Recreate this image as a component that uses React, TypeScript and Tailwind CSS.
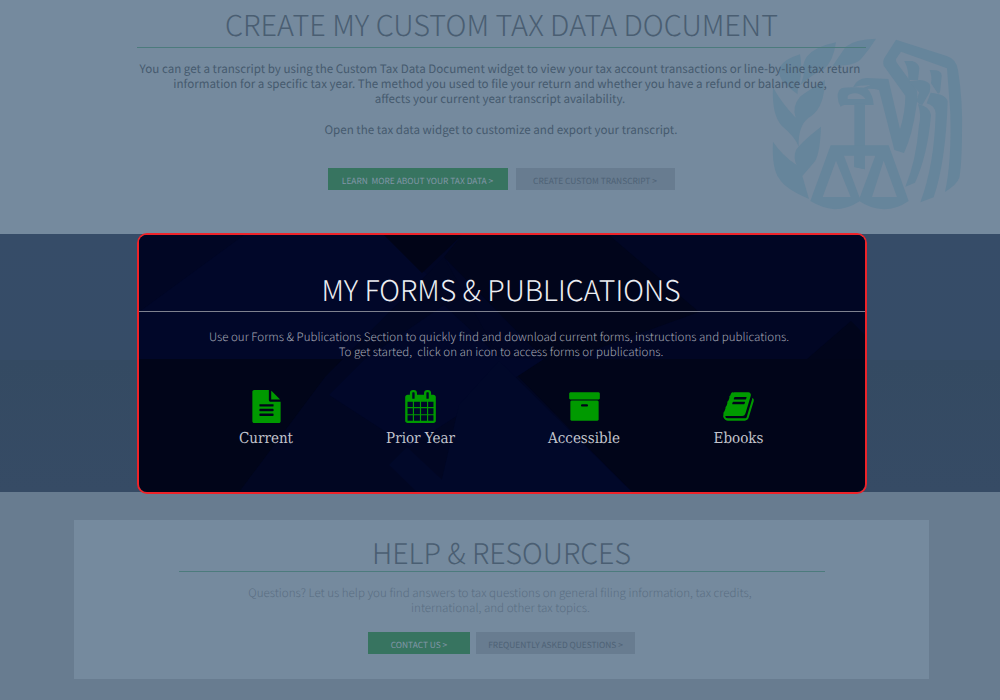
import type { ReactNode } from "react";

const SANS = "font-['Noto_Sans_CJK_SC','Noto_Sans',sans-serif] [text-rendering:geometricPrecision]";
const LIGHT = "font-['Noto_Sans_CJK_SC','Noto_Sans',sans-serif] font-light [text-rendering:geometricPrecision]";

function TaxEmblem() {
  return (
    <svg viewBox="0 0 660 570" className="absolute left-[760px] top-[30px] h-[190px] w-[220px]" fill="#66859b">
      <g transform="translate(15 15)">
        <path d="M105 58Q60 72 45 95Q38 112 50 135Q60 150 98 178Q96 165 104 145Q113 100 105 58Z" />
        <path d="M213 22Q150 35 125 65Q110 90 116 110Q118 122 106 150Q150 112 175 105Q205 80 213 22Z" />
        <path d="M333 11Q270 12 242 35Q225 60 203 92Q270 95 290 70Q315 40 333 11Z" />
        <path d="M24 157Q50 205 92 248Q80 215 105 185Q125 170 180 135Q178 215 140 242Q98 265 101 335Q90 305 50 272Q20 240 24 157Z" />
        <path d="M24 320Q50 360 95 390Q84 370 93 345Q110 320 168 275Q165 365 145 385L112 423L132 492Q60 462 42 430Q20 400 24 320Z" />
      </g>
      <g transform="translate(225 15)">
        <path d="M183 14L335 63Q364 72 369 105Q384 200 381 300Q380 390 373 428Q366 448 330 471Q350 380 346 235L336 100L198 50L183 72Q182 80 186 84L245 165Q250 180 244 215Q232 300 207 354L178 345L132 165Q110 158 80 163Q92 154 107 151Q75 150 54 157Q65 131 95 129L160 132L195 283Q211 230 211 182L146 92Q142 78 150 66Z" />
        <path d="M208 78L232 78Q252 85 253 100L249 135L220 135Q222 105 208 78Z" />
        <path d="M220 139L255 135Q285 138 286 155L284 172L262 210Q250 208 245 198L252 172Z" />
        <path d="M284 105L304 106Q320 110 320 122L316 165Q313 182 306 172L288 145Q292 125 284 105Z" />
        <path d="M249 207Q285 215 288 240Q278 360 240 443L211 455Q243 380 252 270Q260 240 249 207Z" />
        <path d="M287 173Q335 178 338 200Q332 380 296 487L256 502Q298 390 302 235Q300 212 275 205Z" />
        <path fillRule="evenodd" d="M8 185Q8 165 20 160Q40 155 95 158Q115 180 116 210H28Q20 212 17 215Q8 200 8 185ZM38 192V183Q45 175 60 175Q78 175 92 192Z" />
        <path d="M58 205H90V403L58 396Z" />
      </g>
      <path fillRule="evenodd" d="M212 346H386L446 513Q410 538 372 538Q330 536 299 514Q262 538 224 538Q186 534 151 513ZM228 392L188 501H272ZM371 392L336 501H411ZM252 377H283V411L315 418V377H346L299 503Z" />
    </svg>
  );
}

function BannerBackdrop() {
  return (
    <svg viewBox="0 0 726 257" className="absolute inset-0 h-full w-full" preserveAspectRatio="none">
      <rect width="726" height="257" fill="#010519" />
      <path d="M0 0H726V124H0Z" fill="#010624" />
      <path d="M0 77L105 0H245L300 50L226 124H0Z" fill="#010729" />
      <path d="M245 0L283 38L323 0Z" fill="#010417" />
      <path d="M305 22L323 0H470L560 77L430 124H405Z" fill="#01051b" />
      <path d="M305 22L186 142L100 257H493L360 122Z" fill="#010622" />
      <path d="M305 70L226 124L190 160L270 212L405 124L360 122Z" fill="#010729" />
      <path d="M360 126L320 170L300 257H493Z" fill="#010829" />
      <path d="M268 212L250 230L278 257H316Z" fill="#010829" />
      <path d="M712 86L668 124H726V100Z" fill="#01051b" />
    </svg>
  );
}

function FormLink({ label, path, className }: { label: string; path: string; className: string }) {
  return (
    <div className={`flex flex-col items-center ${className}`}>
      <svg viewBox="0 0 1792 1792" className="h-[33px] w-[33px]" fill="#009a00">
        <path d={path} />
      </svg>
      <div className="mt-[3px] whitespace-nowrap font-['DejaVu_Serif_Condensed','DejaVu_Serif',serif] text-[15px] leading-[24px] text-[#c4c6ce] [text-rendering:geometricPrecision]">{label}</div>
    </div>
  );
}

function Button({ children, className }: { children: ReactNode; className: string }) {
  return (
    <div className={`flex h-[22px] items-center justify-center whitespace-pre pt-[4px] text-[8.4px] ${SANS} ${className}`}>{children}</div>
  );
}

const FILE =
  "M1596 476q14 14 28 36h-472v-472q22 14 36 28zm-476 164h544v1056q0 40-28 68t-68 28h-1344q-40 0-68-28t-28-68v-1600q0-40 28-68t68-28h800v544q0 40 28 68t68 28zm160 736v-64q0-14-9-23t-23-9h-704q-14 0-23 9t-9 23v64q0 14 9 23t23 9h704q14 0 23-9t9-23zm0-256v-64q0-14-9-23t-23-9h-704q-14 0-23 9t-9 23v64q0 14 9 23t23 9h704q14 0 23-9t9-23zm0-256v-64q0-14-9-23t-23-9h-704q-14 0-23 9t-9 23v64q0 14 9 23t23 9h704q14 0 23-9t9-23z";
const CALENDAR =
  "M192 1664h288v-288h-288v288zm352 0h320v-288h-320v288zm-352-352h288v-320h-288v320zm352 0h320v-320h-320v320zm-352-384h288v-288h-288v288zm736 736h320v-288h-320v288zm-384-736h320v-288h-320v288zm768 736h288v-288h-288v288zm-384-352h320v-320h-320v320zm-352-864v-288q0-13-9.5-22.5t-22.5-9.5h-64q-13 0-22.5 9.5t-9.5 22.5v288q0 13 9.5 22.5t22.5 9.5h64q13 0 22.5-9.5t9.5-22.5zm736 864h288v-320h-288v320zm-384-384h320v-288h-320v288zm384 0h288v-288h-288v288zm32-480v-288q0-13-9.5-22.5t-22.5-9.5h-64q-13 0-22.5 9.5t-9.5 22.5v288q0 13 9.5 22.5t22.5 9.5h64q13 0 22.5-9.5t9.5-22.5zm384-64v1280q0 52-38 90t-90 38h-1408q-52 0-90-38t-38-90v-1280q0-52 38-90t90-38h128v-96q0-66 47-113t113-47h64q66 0 113 47t47 113v96h384v-96q0-66 47-113t113-47h64q66 0 113 47t47 113v96h128q52 0 90 38t38 90z";
const ARCHIVE =
  "M1088 832q0-26-19-45t-45-19h-256q-26 0-45 19t-19 45 19 45 45 19h256q26 0 45-19t19-45zm576-192v960q0 26-19 45t-45 19h-1408q-26 0-45-19t-19-45v-960q0-26 19-45t45-19h1408q26 0 45 19t19 45zm64-448v256q0 26-19 45t-45 19h-1536q-26 0-45-19t-19-45v-256q0-26 19-45t45-19h1536q26 0 45 19t19 45z";
const BOOK =
  "M1703 478q40 57 18 129l-275 906q-19 64-76.5 107.5t-122.5 43.5h-923q-77 0-148.5-53.5t-99.5-131.5q-24-67-2-127 0-4 3-27t4-37q1-8-3-21.5t-3-19.5q2-11 8-21t16.5-23.5 16.5-23.5q23-38 45-91.5t30-91.5q3-10 .5-30t-.5-28q3-11 17-28t17-23q21-36 42-92t25-90q1-9-2.5-32t.5-28q4-13 22-30.5t22-22.5q19-26 42.5-84.5t27.5-96.5q1-8-3-25.5t-2-26.5q2-8 9-18t18-23 17-21q8-12 16.5-30.5t15-35 16-36 19.5-32 26.5-23.5 36-11.5 47.5 5.5l-1 3q38-9 51-9h761q74 0 114 56t18 130l-274 906q-36 119-71.5 153.5t-128.5 34.5h-869q-27 0-38 15-11 16-1 43 24 70 144 70h923q29 0 56-15.5t35-41.5l300-987q7-22 5-57 38 15 59 43zm-1064 2q-4 13 2 22.5t20 9.5h608q13 0 25.5-9.5t16.5-22.5l21-64q4-13-2-22.5t-20-9.5h-608q-13 0-25.5 9.5t-16.5 22.5zm-83 256q-4 13 2 22.5t20 9.5h608q13 0 25.5-9.5t16.5-22.5l21-64q4-13-2-22.5t-20-9.5h-608q-13 0-25.5 9.5t-16.5 22.5z";

export default function App() {
  return (
    <div className="flex h-[700px] w-[1000px] flex-col overflow-hidden bg-[#687c90]">
      <section className="relative flex h-[234px] shrink-0 flex-col items-center bg-[#758a9e]">
        <TaxEmblem />
        <h1 className={`relative ml-[3px] flex h-[48px] w-[729px] items-center justify-center whitespace-nowrap border-b border-[#4c7b7d] pt-[3px] text-[28.8px] leading-none text-[#4a5e72] ${LIGHT}`}>
          CREATE MY CUSTOM TAX DATA DOCUMENT
        </h1>
        <div className={`relative mt-[14px] flex flex-col items-center whitespace-nowrap text-[11.6px] leading-[15.2px] text-[#465a6e] ${SANS}`}>
          <p>You can get a transcript by using the Custom Tax Data Document widget to view your tax account transactions or line-by-line tax return</p>
          <p>information for a specific tax year. The method you used to file your return and whether you have a refund or balance due,</p>
          <p>affects your current year transcript availability.</p>
          <p className="mt-[15.2px] pl-[2px]">Open the tax data widget to customize and export your transcript.</p>
        </div>
        <div className="relative mt-[30px] flex gap-2 pl-[2px]">
          <Button className="w-[180px] bg-[#377460] text-[#8296a8]">LEARN  MORE ABOUT YOUR TAX DATA &gt;</Button>
          <Button className="w-[159px] bg-[#687c90] text-[#4e6276]">CREATE CUSTOM TRANSCRIPT &gt;</Button>
        </div>
      </section>

      <section className="flex h-[258px] shrink-0 justify-center bg-[linear-gradient(#364c68_0%,#364c67_49%,#344a62_49%,#364b65_100%)]">
        <div className="relative -mt-[1px] ml-[4px] flex h-[261px] w-[730px] flex-col items-center overflow-hidden rounded-[10px] border-2 border-[#ee2329]">
          <BannerBackdrop />
          <h2 className={`relative flex h-[77px] w-full items-end justify-center whitespace-nowrap border-b border-[#7e818f] pr-[2px] pb-[7px] text-[28.5px] leading-none text-[#eceef2] ${LIGHT}`}>
            MY FORMS &amp; PUBLICATIONS
          </h2>
          <div className={`relative mt-[18px] flex flex-col items-center whitespace-pre text-[11.55px] leading-[15.2px] text-[#a5a8b5] ${LIGHT}`}>
            <p className="-ml-[6px]">Use our Forms &amp; Publications Section to quickly find and download current forms, instructions and publications.</p>
            <p className="-ml-[2px]">To get started,  click on an icon to access forms or publications.</p>
          </div>
          <div className="relative mt-[30px] -ml-[8px] flex">
            <FormLink label="Current" path={FILE} className="w-[154px]" />
            <FormLink label="Prior Year" path={CALENDAR} className="w-[155px]" />
            <FormLink label="Accessible" path={ARCHIVE} className="w-[172px]" />
            <FormLink label="Ebooks" path={BOOK} className="w-[137px]" />
          </div>
        </div>
      </section>

      <section className="flex flex-1 flex-col items-center pt-[28px]">
        <div className="ml-[3px] flex h-[159px] w-[855px] flex-col items-center bg-[#758a9e]">
          <h2 className={`flex h-[52px] w-[646px] items-end justify-center whitespace-nowrap border-b border-[#4c7b7d] pb-[4px] text-[28.5px] leading-none text-[#4a5e72] ${LIGHT}`}>
            HELP &amp; RESOURCES
          </h2>
          <div className={`mt-[14px] flex flex-col items-center whitespace-nowrap text-[11.58px] leading-[15.2px] text-[#5a6e83] ${LIGHT}`}>
            <p className="-ml-[3px]">Questions? Let us help you find answers to tax questions on general filing information, tax credits,</p>
            <p className="-ml-[2px]">international, and other tax topics.</p>
          </div>
          <div className="mt-[16px] flex gap-[6px]">
            <Button className="w-[102px] bg-[#377460] text-[#8296a8]">CONTACT US &gt;</Button>
            <Button className="w-[159px] bg-[#687c90] text-[#4e6276]">FREQUENTLY ASKED QUESTIONS &gt;</Button>
          </div>
        </div>
      </section>
    </div>
  );
}
